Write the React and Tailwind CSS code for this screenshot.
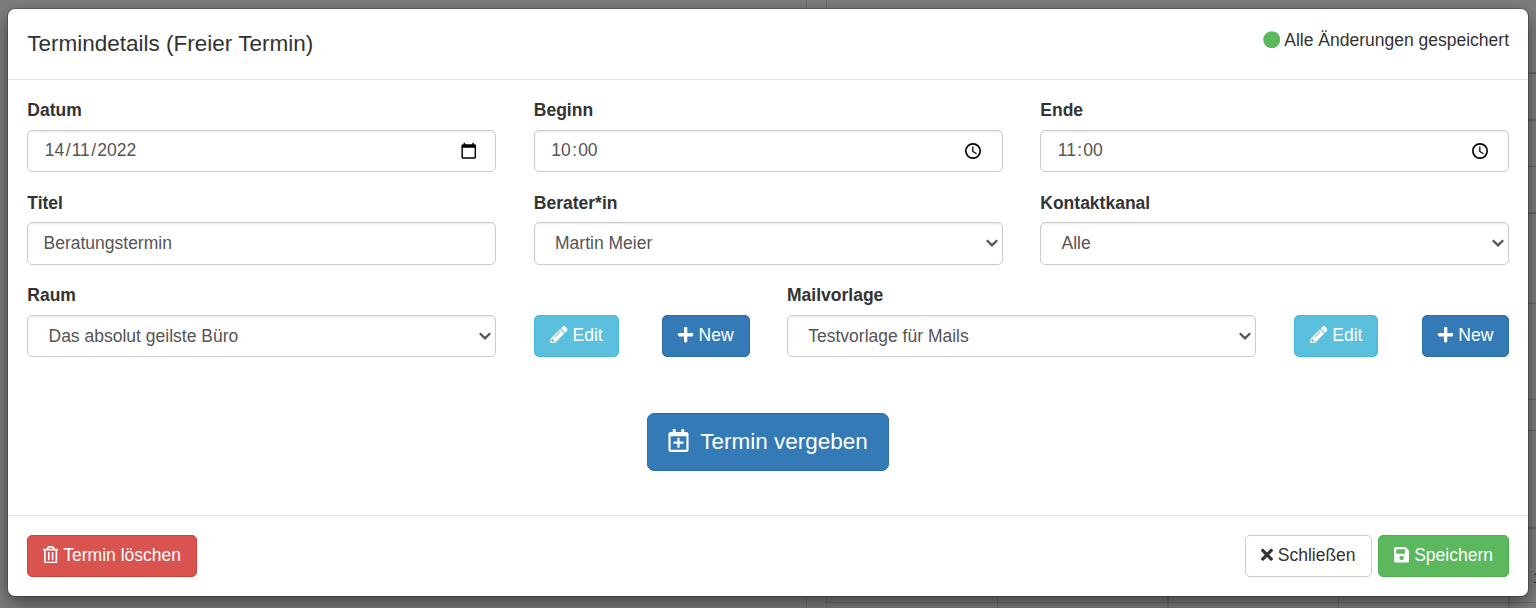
import { FaCircle, FaPencilAlt, FaPlus, FaRegCalendarPlus, FaRegTrashAlt, FaSave, FaTimes } from "react-icons/fa";

const CALENDAR_COLUMNS = [
  "left-[806px] w-px",
  "left-[826px] w-px",
];

const CALENDAR_DAY_COLUMNS = [
  "left-[997px] w-px",
  "left-[1167px] w-[2px]",
  "left-[1338px] w-px",
  "left-[1508px] w-[2px]",
];

const CALENDAR_ROWS = [
  "top-[72px] h-[2px]",
  "top-[119px] h-[2px]",
  "top-[166px] h-px",
  "top-[212px] h-[2px]",
  "top-[303px] h-px",
  "top-[399px] h-px",
  "top-[430px] h-px",
  "top-[527px] h-[2px]",
];

function CalendarBackdrop() {
  return (
    <div className="absolute inset-0 overflow-hidden bg-white" aria-hidden="true">
      {CALENDAR_COLUMNS.map((c) => (
        <div key={c} className={`absolute inset-y-0 bg-[#ddd] ${c}`} />
      ))}
      {CALENDAR_DAY_COLUMNS.map((c) => (
        <div key={c} className={`absolute bottom-0 h-10 bg-[#ddd] ${c}`} />
      ))}
      {CALENDAR_ROWS.map((c) => (
        <div key={c} className={`absolute right-0 w-7 bg-[#ccc] ${c}`} />
      ))}
      <div className="absolute top-[602px] right-0 left-[826px] h-px bg-[#ddd]" />
      <span className="absolute top-[570px] left-[1532.500px] text-[14px] leading-[16px] text-[#337ab7]">1</span>
      <div className="absolute inset-0 bg-black/50" />
    </div>
  );
}

function DateIcon() {
  return (
    <svg className="mr-[0.750px] h-[17.500px] w-[17.500px] shrink-0" viewBox="0 0 24 24" fill="#000">
      <path d="M20 3h-1V1h-2v2H7V1H5v2H4c-1.100 0-2 .9-2 2v16c0 1.100.9 2 2 2h16c1.100 0 2-.9 2-2V5c0-1.100-.9-2-2-2zm0 18H4V8h16v13z" />
    </svg>
  );
}

function ClockIcon() {
  return (
    <svg className="mr-[1.500px] h-5 w-5 shrink-0" viewBox="0 0 24 24" fill="none" stroke="#000">
      <circle cx="12" cy="12" r="8.600" strokeWidth="2" />
      <path d="M11.800 6.500V12.500L16.300 15.200" strokeWidth="1.500" />
    </svg>
  );
}

function Chevron() {
  return (
    <svg className="h-2 w-3 shrink-0" viewBox="0 0 12 8" fill="none" stroke="#555" strokeWidth="2.200">
      <path d="M0.800 1.200 6 6.400 11.200 1.200" />
    </svg>
  );
}

const BOX =
  "flex h-[42.500px] w-full items-center justify-between rounded-[5px] border border-[#ccc] bg-white leading-[25px] text-[#555] shadow-[inset_0_1.250px_1.250px_rgba(0,0,0,0.075)]";

function Label({ children }) {
  return <div className="mb-[6.250px] h-[25px] pl-[0.300px] font-bold leading-[25px]">{children}</div>;
}

function PickerField({ label, parts, separator, icon }) {
  return (
    <div>
      <Label>{label}</Label>
      <div className={`${BOX} pr-[17px] pl-[16.300px]`}>
        <span className="mb-[0.800px] flex">
          {parts.map((part, i) => (
            <span key={i} className="flex">
              {i > 0 && <span className="pr-[0.700px] pl-px">{separator}</span>}
              <span className="px-[0.450px]">{part}</span>
            </span>
          ))}
        </span>
        {icon}
      </div>
    </div>
  );
}

function TextField({ label, value }) {
  return (
    <div>
      <Label>{label}</Label>
      <div className={`${BOX} px-[15.500px]`}>{value}</div>
    </div>
  );
}

function SelectField({ label, value, className = "" }) {
  return (
    <div className={className}>
      <Label>{label}</Label>
      <div className={`${BOX} pr-1 pl-[20.500px]`}>
        <span className="mt-[0.700px]">{value}</span>
        <Chevron />
      </div>
    </div>
  );
}

function Button({ tone, children }) {
  return (
    <button
      type="button"
      className={`inline-flex h-[42px] shrink-0 items-center gap-[5px] whitespace-nowrap rounded-[5px] border px-[15px] pb-px leading-[25px] ${tone}`}
    >
      {children}
    </button>
  );
}

const TONES = {
  info: "border-[#46b8da] bg-[#5bc0de] text-white",
  primary: "border-[#2e6da4] bg-[#337ab7] text-white",
  danger: "border-[#d43f3a] bg-[#d9534f] text-white",
  success: "border-[#4cae4c] bg-[#5cb85c] text-white",
  plain: "border-[#ccc] bg-white text-[#333]",
};

function EditAndNew() {
  return (
    <>
      <div className="flex items-end pl-[0.500px]">
        <Button tone={TONES.info}>
          <FaPencilAlt className="mb-0.5" />
          Edit
        </Button>
      </div>
      <div className="-mr-[0.300px] flex items-end justify-end">
        <Button tone={TONES.primary}>
          <FaPlus className="mb-0.5 w-[15.300px]" />
          New
        </Button>
      </div>
    </>
  );
}

export default function App() {
  return (
    <div className="relative h-[608px] w-[1536px] overflow-hidden px-2 pt-[9px] font-['Liberation_Sans',Arial,sans-serif] text-[17.500px] text-[#333]">
      <CalendarBackdrop />
      <div className="relative flex h-[587px] flex-col rounded-[7px] bg-white shadow-[0_0_0_1px_rgba(0,0,0,0.2),0_6.250px_18.750px_rgba(0,0,0,0.5)]">
        <header className="flex h-[71px] shrink-0 items-start justify-between border-b border-[#e5e5e5] px-[19px] pt-[18.750px]">
          <h4 className="pl-[0.300px] text-[22.500px] leading-[32px]">Termindetails (Freier Termin)</h4>
          <div className="flex items-center gap-1 leading-[25px]">
            <FaCircle className="mb-0.5 text-[#5cb85c]" />
            Alle Änderungen gespeichert
          </div>
        </header>

        <main className="flex grow flex-col px-[19px] pt-[18.400px]">
          <div className="grid grid-cols-3 gap-x-[37.500px] gap-y-[18.750px]">
            <PickerField label="Datum" parts={["14", "11", "2022"]} separator="/" icon={<DateIcon />} />
            <PickerField label="Beginn" parts={["10", "00"]} separator=":" icon={<ClockIcon />} />
            <PickerField label="Ende" parts={["11", "00"]} separator=":" icon={<ClockIcon />} />
            <TextField label="Titel" value="Beratungstermin" />
            <SelectField label="Berater*in" value="Martin Meier" />
            <SelectField label="Kontaktkanal" value="Alle" />
          </div>
          <div className="mt-[18.750px] grid grid-cols-12 gap-x-[37.500px]">
            <SelectField label="Raum" value="Das absolut geilste Büro" className="col-span-4" />
            <EditAndNew />
            <SelectField label="Mailvorlage" value="Testvorlage für Mails" className="col-span-4" />
            <EditAndNew />
          </div>
          <div className="mt-[55.850px] flex justify-center">
            <button
              type="button"
              className="flex h-[58px] w-[242px] items-center justify-center gap-[11px] rounded-[7px] border border-[#2e6da4] bg-[#337ab7] text-[22.500px] leading-[30px] text-white"
            >
              <FaRegCalendarPlus className="mb-[3px] h-[23px] w-[21px]" />
              Termin vergeben
            </button>
          </div>
        </main>

        <footer className="flex h-[81px] shrink-0 items-start justify-between border-t border-[#e5e5e5] px-[19px] pt-[19px]">
          <Button tone={TONES.danger}>
            <FaRegTrashAlt className="mb-0.5 w-[15.300px]" />
            Termin löschen
          </Button>
          <div className="flex gap-[6.300px]">
            <Button tone={TONES.plain}>
              <FaTimes className="mb-0.5 w-[12px]" />
              Schließen
            </Button>
            <Button tone={TONES.success}>
              <FaSave className="mb-0.5 w-[15.300px]" />
              Speichern
            </Button>
          </div>
        </footer>
      </div>
    </div>
  );
}
